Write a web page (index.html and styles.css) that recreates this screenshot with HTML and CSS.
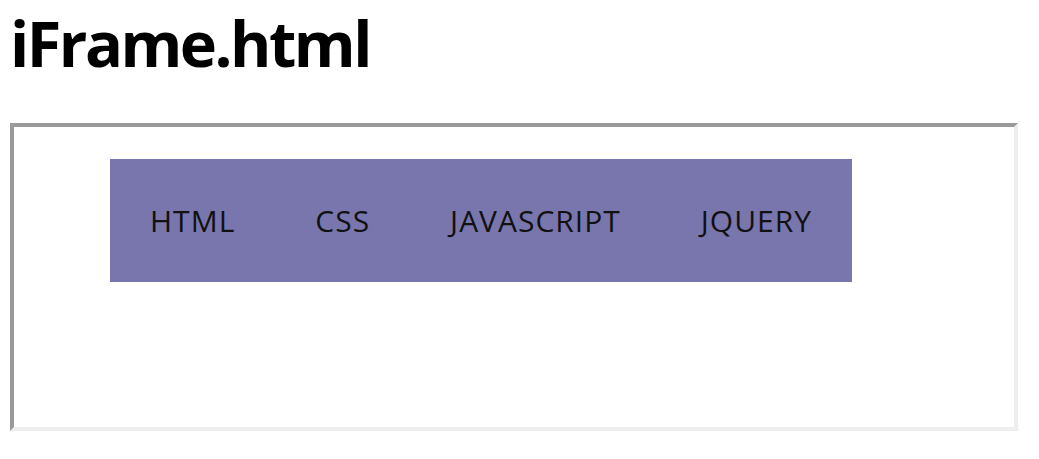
FILE: index.html
```html
<!DOCTYPE html>
<html lang="ko">

<head>
    <meta charset="UTF-8">
    <meta name="viewport" content="width=device-width, initial-scale=1.0">
    <title>iFrame.html</title>
    <link rel="stylesheet" href="styles.css">
</head>

<body>
    <h1>iFrame.html</h1>
    <div class="frame">
        <ul class="menu">
            <li>HTML</li>
            <li>CSS</li>
            <li>JAVASCRIPT</li>
            <li>JQUERY</li>
        </ul>
    </div>
</body>

</html>
```

FILE: styles.css
```css
body {
    font-family: "Open Sans", "Noto Sans CJK KR", sans-serif;
    margin: 0;
    padding: 0 10px;
    background-color: white;
}

h1 {
    margin: 0;
    height: 123px;
    font-size: 63px;
    line-height: 86px;
    font-weight: bold;
    letter-spacing: -2.5px;
    color: #000;
}

.frame {
    border-style: solid;
    border-width: 4px;
    border-color: #9a9a9a #eeeeee #eeeeee #9a9a9a;
    padding: 32px 0 0 96px;
    width: 904px;
    height: 268px;
}

.menu {
    display: inline-flex;
    margin: 0;
    padding: 0;
    list-style: none;
    background-color: #7976ae;
}

.menu li {
    padding: 40px;
    font-size: 30px;
    line-height: 43px;
    letter-spacing: 1px;
    color: #111;
}
```
